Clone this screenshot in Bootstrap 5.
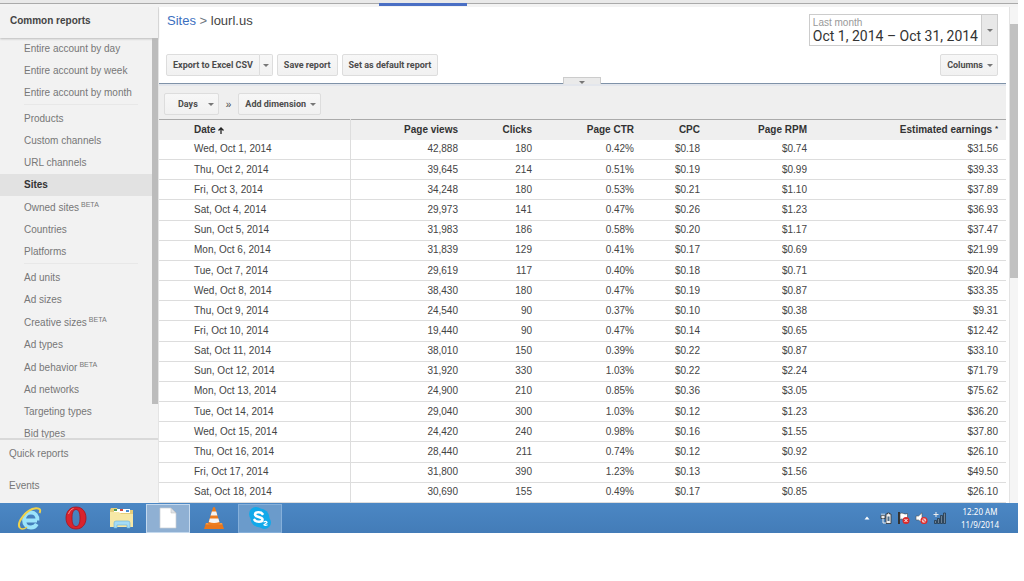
<!DOCTYPE html>
<html lang="en">
<head>
<meta charset="utf-8">
<meta name="viewport" content="width=device-width, initial-scale=1">
<title>Sites - lourl.us</title>
<link rel="stylesheet" href="https://cdn.jsdelivr.net/npm/bootstrap@5.3.0/dist/css/bootstrap.min.css">
<style>
  body { font: 10px/12px "Liberation Sans", Arial, sans-serif; color: #444; background: #fff; }
  .screen { height: calc(100vh - 48px); margin-right: 6px; }
  .tab-strip { height: 4px; background: #e9e9e9; border-bottom: 1px solid #aaa; }
  .tab-gap { height: 3px; background: #f3f3f3; }
  .tab-mark { width: 88px; height: 3px; margin-left: 379px; margin-top: -1px; background: #4a6fc4; }

  .side { width: 159px; background: #f2f2f2; border-right: 1px solid #e4e4e4; }
  .side-title { height: 31px; padding: 0 10px 4px; box-shadow: 0 1px 2px #bbb; z-index: 1; }
  .side-scroll { min-height: 0; }
  .side-list a { height: 22px; padding-left: 24px; color: #777; text-decoration: none; display: flex; align-items: center; }
  .side-list a.has-beta { height: 23px; padding-top: 1px; }
  .side-list a.current { background: #e2e2e2; color: #333; font-weight: bold; }
  .side-list sup { font-size: 7px; line-height: 8px; top: -3px; margin-left: 2px; }
  .side-list hr { margin: 0 14px 3px 24px; border-top: 1px solid #ccc; }
  .side-thumb { width: 6px; height: calc(100% - 34px); background: #bcbcbc; }
  .side-foot { height: 65px; border-top: 2px solid #d9d9d9; padding: 8px 9px 11px; }
  .side-foot a { color: #777; text-decoration: none; }

  .crumbs { font-size: 13px; line-height: 14px; padding-left: 1px; }
  .crumbs a { color: #3b6fc0; text-decoration: none; }
  .g-btn { height: 22px; border: 1px solid #ddd; border-radius: 2px; background: linear-gradient(#f7f7f7, #f1f1f1); color: #4c4c4c; font: bold 9px/20px Roboto, sans-serif; padding: 0 6px; white-space: nowrap; }
  .g-btn.menu { padding: 0 4px 0 6px; }
  .g-btn.wide { padding: 0 4px 0 13px; }
  .g-btn .caret { margin-left: 4px; }
  .g-btn.wide .caret { margin-left: 10px; }
  .caret { display: inline-block; border: 3px solid transparent; border-top-color: #777; border-bottom: 0; vertical-align: 1px; }
  .g-btn.split { padding: 0 3px; }
  .range { border: 1px solid #ccc; background: #fff; padding: 0; text-align: left; color: #333; height: 32px; }
  .range-text { padding: 0 3px; white-space: nowrap; }
  .range-text small { display: block; font-size: 10px; line-height: 13px; padding-top: 1px; color: #999; }
  .range-text span { display: block; font: 14px/14px Roboto, sans-serif; }
  .range-arrow { width: 16px; background: #e8e8e8; border-left: 1px solid #ccc; }
  .report-head { padding: 7px 8px 7px 7px; border-bottom: 1px solid #7f92a8; }
  .handle { left: 404px; bottom: -1px; width: 38px; height: 7px; border: 1px solid #ccc; border-bottom: 0; background: #eaeaea; padding: 0; line-height: 5px; }
  .dims { height: 35px; padding: 7px 5px 0; background: #efefef; border-top: 2px solid #e3e6ec; }
  .dims .sep { padding: 6px 7px 0; }

  .report { table-layout: fixed; font-size: 10px; line-height: 12px; margin: 0; }
  .report th, .report td { height: 20px; padding: 0 8px; vertical-align: middle; text-align: right; white-space: nowrap; }
  .report th { background: #efefef; color: #333; border-top: 1px solid #aaa; }
  .report th sup { font-size: 8px; top: -2px; }
  .report td { border-bottom: 1px solid #ddd; }
  .report tr > :first-child { text-align: left; padding-left: 35px; border-right: 1px solid #ddd; }
  .w-date { width: 191px; } .w-views { width: 116px; } .w-clicks { width: 74px; }
  .w-ctr { width: 102px; } .w-cpc { width: 66px; } .w-rpm { width: 107px; }

  .page-bar { width: 9px; background: #f5f5f5; padding-top: 17px; margin-left: 3px; border-left: 1px solid #e3e3e3; }
  .page-thumb { height: 53%; background: #c1c1c1; }

  .task { height: 30px; background: linear-gradient(#4b87c4, #437cb8); padding-left: 8px; }
  .task-btn { width: 44px; height: 29px; margin-right: 2px; padding: 0; border: 1px solid transparent; background: none; }
  .task-btn.open { background: #6b9bcb; border-color: #86b0da; }
  .task-btn.front { background: #8fb0d3; border-color: #c4d9ee; }
  .tray { gap: 5px; }
  .clock { width: 60px; font: 8px/13px "Noto Sans", sans-serif; color: #fff; }
  svg { display: block; margin: auto; }
</style>
</head>
<body>
<div class="screen d-flex flex-column overflow-hidden">
  <div class="tab-strip flex-shrink-0"></div>
  <div class="tab-gap flex-shrink-0"><div class="tab-mark"></div></div>

  <div class="d-flex flex-grow-1 overflow-hidden">
    <aside class="side d-flex flex-column flex-shrink-0">
      <div class="side-title d-flex align-items-center flex-shrink-0 fw-bold position-relative">Common reports</div>
      <div class="side-scroll d-flex flex-grow-1 overflow-hidden">
        <nav class="side-list flex-grow-1" aria-label="Common reports">
          <a href="#">Entire account by day</a>
          <a href="#">Entire account by week</a>
          <a href="#">Entire account by month</a>
          <hr>
          <a href="#">Products</a>
          <a href="#">Custom channels</a>
          <a href="#">URL channels</a>
          <a href="#" class="current">Sites</a>
          <a href="#" class="has-beta">Owned sites<sup>BETA</sup></a>
          <a href="#">Countries</a>
          <a href="#">Platforms</a>
          <hr>
          <a href="#">Ad units</a>
          <a href="#">Ad sizes</a>
          <a href="#" class="has-beta">Creative sizes<sup>BETA</sup></a>
          <a href="#">Ad types</a>
          <a href="#" class="has-beta">Ad behavior<sup>BETA</sup></a>
          <a href="#">Ad networks</a>
          <a href="#">Targeting types</a>
          <a href="#">Bid types</a>
        </nav>
        <div class="side-thumb flex-shrink-0"></div>
      </div>
      <div class="side-foot d-flex flex-column justify-content-between flex-shrink-0">
        <a href="#">Quick reports</a>
        <a href="#">Events</a>
      </div>
    </aside>

    <main class="d-flex flex-column flex-grow-1 overflow-hidden">
      <header class="report-head position-relative flex-shrink-0">
        <div class="d-flex justify-content-between align-items-start mb-2">
          <div class="crumbs"><a href="#">Sites</a> <span class="text-secondary">&gt;</span> lourl.us</div>
          <button type="button" class="range d-flex">
            <span class="range-text"><small>Last month</small><span>Oct 1, 2014 – Oct 31, 2014</span></span>
            <span class="range-arrow d-flex align-items-center justify-content-center h-100"><i class="caret"></i></span>
          </button>
        </div>
        <div class="d-flex">
          <div class="d-flex me-1">
            <button type="button" class="g-btn rounded-end-0">Export to Excel CSV</button>
            <button type="button" class="g-btn split rounded-start-0 border-start-0" aria-label="More export formats"><i class="caret m-0"></i></button>
          </div>
          <button type="button" class="g-btn me-1">Save report</button>
          <button type="button" class="g-btn">Set as default report</button>
          <button type="button" class="g-btn menu ms-auto">Columns<i class="caret"></i></button>
        </div>
        <button type="button" class="handle position-absolute" aria-label="Show chart"><i class="caret"></i></button>
      </header>
      <div class="dims d-flex align-items-start flex-shrink-0">
        <button type="button" class="g-btn wide">Days<i class="caret"></i></button>
        <span class="sep">»</span>
        <button type="button" class="g-btn menu">Add dimension<i class="caret"></i></button>
      </div>
      <div class="flex-grow-1 overflow-hidden">
        <table class="report w-100 h-100">
          <colgroup><col class="w-date"><col class="w-views"><col class="w-clicks"><col class="w-ctr"><col class="w-cpc"><col class="w-rpm"><col></colgroup>
          <thead><tr><th>Date <svg class="d-inline" width="6" height="7" viewBox="0 0 6 7"><path d="M3 7V1M.5 3.500 3 1l2.500 2.500" fill="none" stroke="#222" stroke-width="1.300"/></svg></th><th>Page views</th><th>Clicks</th><th>Page CTR</th><th>CPC</th><th>Page RPM</th><th>Estimated earnings <sup>*</sup></th></tr></thead>
          <tbody>
            <tr><td>Wed, Oct 1, 2014</td><td>42,888</td><td>180</td><td>0.42%</td><td>$0.18</td><td>$0.74</td><td>$31.56</td></tr>
            <tr><td>Thu, Oct 2, 2014</td><td>39,645</td><td>214</td><td>0.51%</td><td>$0.19</td><td>$0.99</td><td>$39.33</td></tr>
            <tr><td>Fri, Oct 3, 2014</td><td>34,248</td><td>180</td><td>0.53%</td><td>$0.21</td><td>$1.10</td><td>$37.89</td></tr>
            <tr><td>Sat, Oct 4, 2014</td><td>29,973</td><td>141</td><td>0.47%</td><td>$0.26</td><td>$1.23</td><td>$36.93</td></tr>
            <tr><td>Sun, Oct 5, 2014</td><td>31,983</td><td>186</td><td>0.58%</td><td>$0.20</td><td>$1.17</td><td>$37.47</td></tr>
            <tr><td>Mon, Oct 6, 2014</td><td>31,839</td><td>129</td><td>0.41%</td><td>$0.17</td><td>$0.69</td><td>$21.99</td></tr>
            <tr><td>Tue, Oct 7, 2014</td><td>29,619</td><td>117</td><td>0.40%</td><td>$0.18</td><td>$0.71</td><td>$20.94</td></tr>
            <tr><td>Wed, Oct 8, 2014</td><td>38,430</td><td>180</td><td>0.47%</td><td>$0.19</td><td>$0.87</td><td>$33.35</td></tr>
            <tr><td>Thu, Oct 9, 2014</td><td>24,540</td><td>90</td><td>0.37%</td><td>$0.10</td><td>$0.38</td><td>$9.31</td></tr>
            <tr><td>Fri, Oct 10, 2014</td><td>19,440</td><td>90</td><td>0.47%</td><td>$0.14</td><td>$0.65</td><td>$12.42</td></tr>
            <tr><td>Sat, Oct 11, 2014</td><td>38,010</td><td>150</td><td>0.39%</td><td>$0.22</td><td>$0.87</td><td>$33.10</td></tr>
            <tr><td>Sun, Oct 12, 2014</td><td>31,920</td><td>330</td><td>1.03%</td><td>$0.22</td><td>$2.24</td><td>$71.79</td></tr>
            <tr><td>Mon, Oct 13, 2014</td><td>24,900</td><td>210</td><td>0.85%</td><td>$0.36</td><td>$3.05</td><td>$75.62</td></tr>
            <tr><td>Tue, Oct 14, 2014</td><td>29,040</td><td>300</td><td>1.03%</td><td>$0.12</td><td>$1.23</td><td>$36.20</td></tr>
            <tr><td>Wed, Oct 15, 2014</td><td>24,420</td><td>240</td><td>0.98%</td><td>$0.16</td><td>$1.55</td><td>$37.80</td></tr>
            <tr><td>Thu, Oct 16, 2014</td><td>28,440</td><td>211</td><td>0.74%</td><td>$0.12</td><td>$0.92</td><td>$26.10</td></tr>
            <tr><td>Fri, Oct 17, 2014</td><td>31,800</td><td>390</td><td>1.23%</td><td>$0.13</td><td>$1.56</td><td>$49.50</td></tr>
            <tr><td>Sat, Oct 18, 2014</td><td>30,690</td><td>155</td><td>0.49%</td><td>$0.17</td><td>$0.85</td><td>$26.10</td></tr>
          </tbody>
        </table>
      </div>
    </main>
    <div class="page-bar flex-shrink-0"><div class="page-thumb"></div></div>
  </div>

  <footer class="task d-flex align-items-center flex-shrink-0">
    <button type="button" class="task-btn" aria-label="Internet Explorer">
      <svg width="26" height="25" viewBox="0 0 26 25"><path d="M8 14.500H20M19.800 18C18.500 20.500 16.500 21.500 14 21.500C9.500 21.500 7 18 7 14C7 9.500 10 6.500 14 6.500C18 6.500 20.800 9.500 20.500 14.500" fill="none" stroke="#9be4fb" stroke-width="3.800"/><path d="M3 22C-1 17 9 3 19 2.200C23 2 24 4 22.500 7" fill="none" stroke="#f0d24a" stroke-width="2"/><path d="M3 22C5 24 8 22.500 10 21" fill="none" stroke="#f0d24a" stroke-width="1.500"/></svg>
    </button>
    <button type="button" class="task-btn" aria-label="Opera">
      <svg width="22" height="24" viewBox="0 0 22 24"><path fill-rule="evenodd" fill="#d9232e" stroke="#a8131d" stroke-width=".8" d="M11 1C4.500 1 1 6 1 12s3.500 11 10 11 10-5 10-11S17.500 1 11 1Zm0 2.500c2.800 0 4 3.500 4 8.500s-1.200 8.500-4 8.500S7 17 7 12s1.200-8.500 4-8.500Z"/><path d="M3.500 8C4.500 5 6.500 3 8.500 2.500" stroke="#f58a8a" fill="none"/></svg>
    </button>
    <button type="button" class="task-btn" aria-label="File Explorer">
      <svg width="26" height="24" viewBox="0 0 26 24"><path fill="#e5cd7a" d="M1 4 2 2h6l1 2h15v17H1Z"/><path fill="#fff" d="M5 3h16v4H5Z"/><path fill="#4b9b51" d="M5 3h3v2H5Z"/><path fill="#d3493d" d="M11 3h3v2h-3Z"/><path fill="#4a8bd0" d="M17 4h3v2h-3Z"/><path fill="#f7e8a6" d="M1 6h9l2 2h12v13H1Z"/><path fill="#a5dcf5" stroke="#68afd8" stroke-width=".6" d="M5 22v-5q0-2 2-2h12q2 0 2 2v5h-3v-3H8v3Z"/></svg>
    </button>
    <button type="button" class="task-btn front" aria-label="Document">
      <svg width="18" height="22" viewBox="0 0 18 22"><path fill="#fff" stroke="#c9ced4" stroke-width=".7" d="M1 1h11l5 5v15H1Z"/><path fill="#dfe3e8" stroke="#bbb" stroke-width=".5" d="M12 1v5h5Z"/></svg>
    </button>
    <button type="button" class="task-btn" aria-label="VLC media player">
      <svg width="22" height="24" viewBox="0 0 22 24"><path fill="#e8771c" d="M3 17h16l2 6H1Z"/><path fill="#f2994a" d="M3 17h16l.5 1.500h-17Z"/><path fill="#ee7d1e" d="M10 1.500q1-1 2 0L17 18q-6 3-12 0Z"/><path fill="#f4f4f4" d="M8.900 5.500h4.300L14.400 9.500H7.600ZM6.800 12.500h8.600l1 3.500q-5.400 2-10.600 0Z"/></svg>
    </button>
    <button type="button" class="task-btn open" aria-label="Skype">
      <svg width="24" height="24" viewBox="0 0 24 24"><circle cx="8" cy="8" r="7" fill="#12a9ea"/><circle cx="16.500" cy="16.500" r="6.500" fill="#12a9ea"/><circle cx="12" cy="12" r="9.500" fill="#12a9ea"/><path d="M14.500 8C13 5.500 7 5.500 7 8.500C7 11.500 14.500 10.500 14.500 13.500C14.500 16.500 8 16.500 6.500 13.800" fill="none" stroke="#fff" stroke-width="2.600" stroke-linecap="round"/><path d="M15.500 16Q18.500 14.500 19 16.500Q18 17.500 16 18.800Q17 20 19.500 18.800" fill="none" stroke="#fff" stroke-width="1.200"/></svg>
    </button>
    <div class="tray d-flex align-items-center ms-auto">
      <svg width="8" height="12" viewBox="0 0 8 12"><path fill="#fff" d="M1.500 7.500 4 4.500l2.500 3Z"/></svg>
      <svg class="ms-1" width="12" height="12" viewBox="0 0 12 12"><path fill="#eee" stroke="#333" stroke-width=".8" d="M6 2h1.500V1h2v1H11v9.500H6ZM1 3.500h4v3H1Z"/><path stroke="#eee" fill="none" d="M2 1.500v2M4 1.500v2M3 6.500V11h3"/><path fill="#4b6a86" d="M7.500 4.500h2v4.500h-2Z"/></svg>
      <svg width="13" height="12" viewBox="0 0 13 12"><path fill="#333" d="M1 0h2v12H1Z"/><path fill="#fff" stroke="#444" stroke-width=".6" d="M3 1.500q2-1 3.500 0t4 0v6q-2 1-4 0t-3.500 0Z"/><circle cx="9" cy="8.500" r="3.500" fill="#dc2b2b"/><path stroke="#fff" d="m7.500 7 3 3m0-3-3 3"/></svg>
      <svg width="13" height="12" viewBox="0 0 13 12"><path fill="#fff" stroke="#555" stroke-width=".6" d="M1 4h2.500L7 .8v10L3.500 8H1Z"/><circle cx="9" cy="8.500" r="2.900" fill="#f4c0c0" stroke="#dc2b2b" stroke-width="1.300"/><path stroke="#dc2b2b" d="m7 6.500 4 4"/></svg>
      <svg width="13" height="12" viewBox="0 0 13 12"><path fill="#6d8296" stroke="#25384a" stroke-width=".8" d="M1.500 8.500h2v3h-2ZM4.500 6.500h2v5h-2ZM7.500 3.500h2v8h-2ZM10.500 1h2v10.500h-2Z"/><path d="M3 0v5M.5 2.500h5" stroke="#eee"/></svg>
    </div>
    <div class="clock text-center ms-1 me-2">12:20 AM<br>11/9/2014</div>
  </footer>
</div>
<script src="https://cdn.jsdelivr.net/npm/bootstrap@5.3.0/dist/js/bootstrap.bundle.min.js"></script>
</body>
</html>
